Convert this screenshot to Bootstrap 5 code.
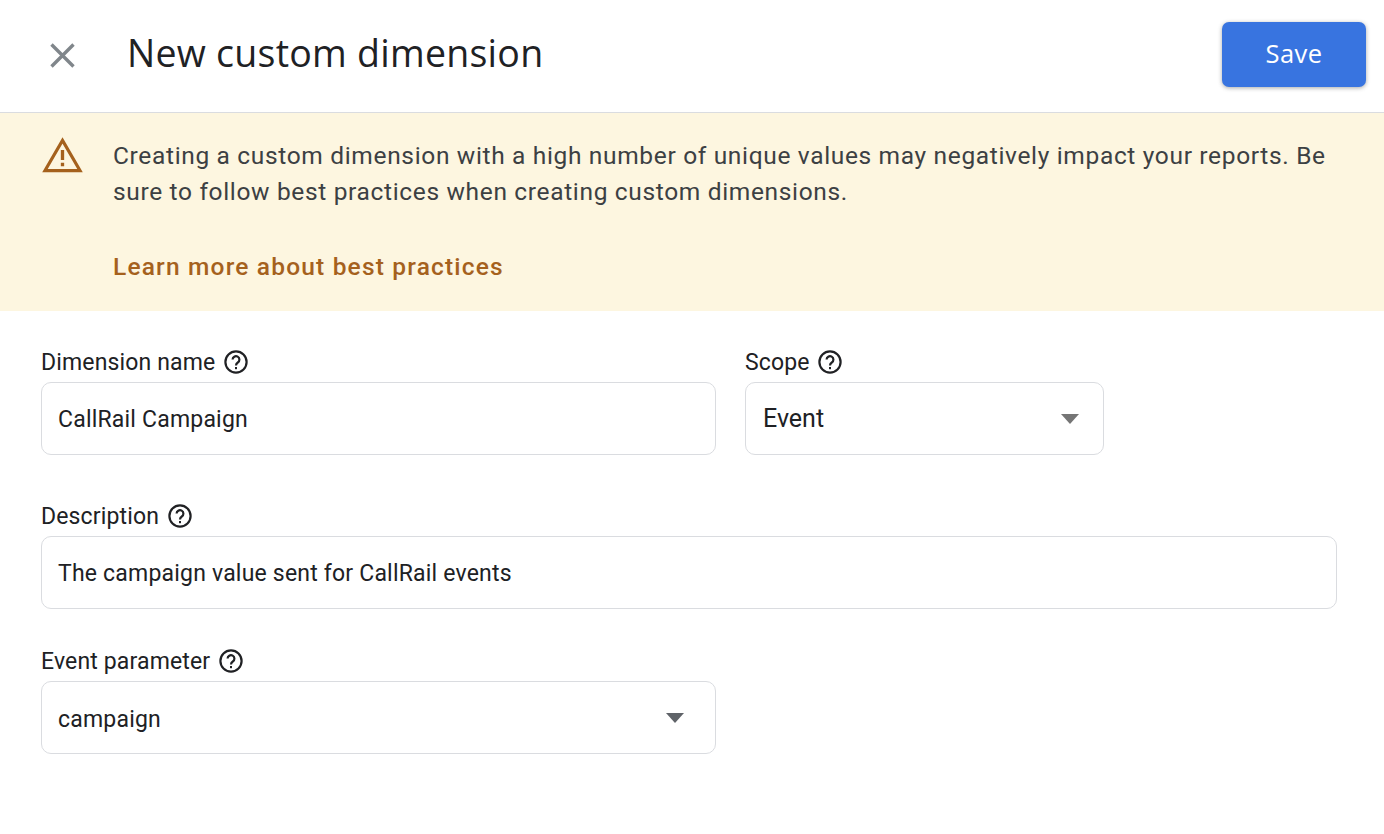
<!DOCTYPE html>
<html lang="en">
<head>
    <meta charset="UTF-8">
    <meta name="viewport" content="width=device-width, initial-scale=1.0">
    <title>New custom dimension</title>
    <link href="https://cdn.jsdelivr.net/npm/bootstrap@5.3.0/dist/css/bootstrap.min.css" rel="stylesheet">
    <style>
        body { font-family: Roboto, "Liberation Sans", sans-serif; color: #202124; background: #fff; }
        .top-bar { height: 113px; border-bottom: 1px solid #dadce0; padding: 22px 18px 0 48px; }
        .close-btn { width: 30px; height: 30px; margin-top: 19px; border: 0; background: none; padding: 0; }
        .page-title { font-family: "Open Sans", Roboto, sans-serif; font-size: 37.5px; font-weight: 400; letter-spacing: .25px; line-height: 62px; margin: 0 0 0 49px; color: #202124; }
        .save-btn { width: 144px; height: 65px; padding-bottom: 3px; background: #3874e0; color: #fff; border: 0; border-radius: 7px; font-size: 25.5px; font-weight: 500; letter-spacing: .4px; box-shadow: 0 1px 4px rgba(60,64,67,.45); font-family: "Open Sans", Roboto, sans-serif; }
        .warn-box { height: 198px; background: #fdf6e0; padding: 25px 40px 0 42px; color: #3c4043; font-size: 24.5px; line-height: 36px; letter-spacing: .66px; }
        .warn-icon { width: 41px; flex: none; margin-top: -1px; }
        .warn-text { margin-left: 30px; }
        .warn-text p { margin: 0 0 39px; }
        .warn-link { color: #a5611d; font-weight: 500; text-decoration: none; letter-spacing: 1.18px; }
        .form-area { padding: 34px 47px 0 41px; }
        .field-label { font-size: 23px; line-height: 32px; padding-top: 2px; letter-spacing: .15px; margin-bottom: 3px; display: flex; align-items: center; gap: 8.5px; color: #202124; }
        .field-label svg { margin-top: -3px; }
        .field-box { height: 73px; border: 1px solid #dadce0; border-radius: 10px; padding: 4px 16px 0; font-size: 23px; letter-spacing: .2px; display: flex; align-items: center; justify-content: space-between; color: #202124; }
        .field-row { gap: 29px; margin-bottom: 44px; }
        .name-col { width: 675px; }
        .scope-col { width: 359px; }
        .scope-box { font-size: 25px; padding: 0 17px; letter-spacing: 0; }
        .drop-arrow { width: 0; height: 0; border-left: 9.5px solid transparent; border-right: 9.5px solid transparent; border-top: 10px solid #757575; margin-right: 7px; }
        .param-box { padding-top: 5px; }
        .param-box .drop-arrow { margin: 0 15px 5px 0; border-top-color: #5f6368; }
        .desc-row { margin-bottom: 35px; }
    </style>
</head>
<body>
    <div class="top-bar d-flex align-items-start">
        <button class="close-btn" type="button" aria-label="Close">
            <svg width="30" height="30" viewBox="0 0 30 30"><path d="M3.5 3.5 L25.5 25.5 M25.5 3.5 L3.5 25.5" stroke="#80868b" stroke-width="3.4" fill="none"/></svg>
        </button>
        <h1 class="page-title flex-grow-1">New custom dimension</h1>
        <button class="save-btn" type="button">Save</button>
    </div>

    <div class="warn-box d-flex">
        <svg class="warn-icon" height="36" viewBox="0 0 42 36"><path d="M21 3 L39 34 H3 Z" fill="none" stroke="#a5611d" stroke-width="3.2"/><path d="M19.3 13 h3.4 v10 h-3.4 z M19.3 26 h3.4 v3.6 h-3.4 z" fill="#a5611d"/></svg>
        <div class="warn-text">
            <p>Creating a custom dimension with a high number of unique values may negatively impact your reports. Be sure to follow best practices when creating custom dimensions.</p>
            <a class="warn-link" href="#">Learn more about best practices</a>
        </div>
    </div>

    <form class="form-area">
        <div class="d-flex field-row">
            <div class="name-col">
                <label class="field-label">Dimension name
                    <svg width="24" height="24" viewBox="0 0 24 24"><circle cx="12" cy="12" r="10.6" fill="none" stroke="#202124" stroke-width="2.2"/><path d="M8.6 9.6a3.4 3.4 0 1 1 5.2 2.9c-1.2.8-1.8 1.4-1.8 2.9" fill="none" stroke="#202124" stroke-width="2.2"/><rect x="11" y="17" width="2" height="2.2" fill="#202124"/></svg>
                </label>
                <div class="field-box">CallRail Campaign</div>
            </div>
            <div class="scope-col">
                <label class="field-label">Scope
                    <svg width="24" height="24" viewBox="0 0 24 24"><circle cx="12" cy="12" r="10.6" fill="none" stroke="#202124" stroke-width="2.2"/><path d="M8.6 9.6a3.4 3.4 0 1 1 5.2 2.9c-1.2.8-1.8 1.4-1.8 2.9" fill="none" stroke="#202124" stroke-width="2.2"/><rect x="11" y="17" width="2" height="2.2" fill="#202124"/></svg>
                </label>
                <div class="field-box scope-box">Event <span class="drop-arrow"></span></div>
            </div>
        </div>
        <div class="desc-row">
            <label class="field-label">Description
                <svg width="24" height="24" viewBox="0 0 24 24"><circle cx="12" cy="12" r="10.6" fill="none" stroke="#202124" stroke-width="2.2"/><path d="M8.6 9.6a3.4 3.4 0 1 1 5.2 2.9c-1.2.8-1.8 1.4-1.8 2.9" fill="none" stroke="#202124" stroke-width="2.2"/><rect x="11" y="17" width="2" height="2.2" fill="#202124"/></svg>
            </label>
            <div class="field-box">The campaign value sent for CallRail events</div>
        </div>
        <div class="name-col">
            <label class="field-label">Event parameter
                <svg width="24" height="24" viewBox="0 0 24 24"><circle cx="12" cy="12" r="10.6" fill="none" stroke="#202124" stroke-width="2.2"/><path d="M8.6 9.6a3.4 3.4 0 1 1 5.2 2.9c-1.2.8-1.8 1.4-1.8 2.9" fill="none" stroke="#202124" stroke-width="2.2"/><rect x="11" y="17" width="2" height="2.2" fill="#202124"/></svg>
            </label>
            <div class="field-box param-box">campaign <span class="drop-arrow"></span></div>
        </div>
    </form>

    <script src="https://cdn.jsdelivr.net/npm/bootstrap@5.3.0/dist/js/bootstrap.bundle.min.js"></script>
</body>
</html>
